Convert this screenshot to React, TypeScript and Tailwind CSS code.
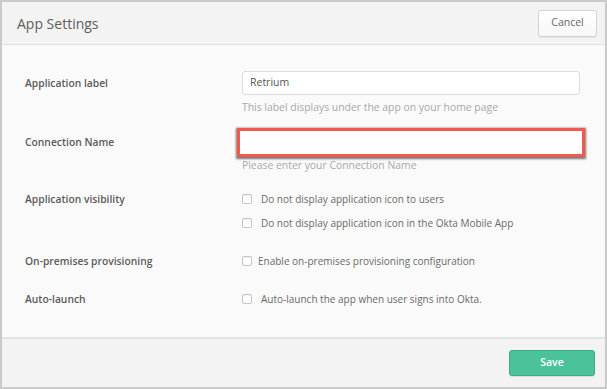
import React from "react";

const font = { fontFamily: '"Open Sans", "Liberation Sans", sans-serif' };

function Box() {
  return (
    <span className="inline-block w-[10px] h-[10px] rounded-[2px] border border-[#c4c4c4] bg-white shadow-[inset_0_1px_1px_rgba(0,0,0,0.06)]" />
  );
}

function Label({ children }: { children: React.ReactNode }) {
  return (
    <div className="w-[217px] shrink-0 text-[10.3px] font-semibold text-[#5a5a5a] leading-[14px]">
      {children}
    </div>
  );
}

export default function App() {
  return (
    <div
      className="w-[607px] h-[389px] border-2 border-[#cacaca] bg-[#fafafa] flex flex-col overflow-hidden"
      style={font}
    >
      <div className="h-[43px] shrink-0 bg-[#f3f3f3] border-b border-[#e2e2e2] flex items-center justify-between pl-[15px] pr-[8px]">
        <div className="text-[14px] text-[#5e5e5e]">App Settings</div>
        <button className="h-[27px] w-[59px] rounded-[3px] border border-[#d3d3d3] bg-gradient-to-b from-white to-[#f7f7f7] shadow-[0_1px_1px_rgba(0,0,0,0.06)] text-[10.5px] text-[#666]">
          Cancel
        </button>
      </div>

      <div className="flex-1 pl-[23px] pr-[25px] pt-[26px] flex flex-col">
        <div className="flex items-start">
          <div className="h-[24px] flex items-center">
            <Label>Application label</Label>
          </div>
          <div className="flex-1">
            <div className="h-[24px] bg-white border border-[#dcdcdc] rounded-[3px] flex items-center pl-[7px] text-[10.5px] text-[#555]">
              Retrium
            </div>
            <div className="mt-[5px] text-[10.4px] leading-[14px] text-[#a9a9a9]">
              This label displays under the app on your home page
            </div>
          </div>
        </div>

        <div className="flex items-start mt-[14px]">
          <div className="h-[27px] flex items-center">
            <Label>Connection Name</Label>
          </div>
          <div className="flex-1">
            <div className="ml-[-5px] mr-[-5px] h-[29px] border-[3px] border-[#f2584b] bg-white shadow-[0_1px_2px_1px_rgba(60,60,60,0.7)]" />
            <div className="mt-[1px] text-[10.4px] leading-[14px] text-[#a9a9a9]">
              Please enter your Connection Name
            </div>
          </div>
        </div>

        <div className="flex items-start mt-[20px]">
          <Label>Application visibility</Label>
          <div className="flex-1 flex flex-col gap-[10px] text-[10px] leading-[14px] text-[#6a6a6a]">
            <div className="flex items-center gap-[9px]">
              <Box />
              <span>Do not display application icon to users</span>
            </div>
            <div className="flex items-center gap-[9px]">
              <Box />
              <span>Do not display application icon in the Okta Mobile App</span>
            </div>
          </div>
        </div>

        <div className="flex items-start mt-[24px]">
          <Label>On-premises provisioning</Label>
          <div className="flex items-center gap-[6px] text-[10px] leading-[14px] text-[#6a6a6a]">
            <Box />
            <span>Enable on-premises provisioning configuration</span>
          </div>
        </div>

        <div className="flex items-start mt-[24px]">
          <Label>Auto-launch</Label>
          <div className="flex items-center gap-[9px] text-[10px] leading-[14px] text-[#6a6a6a]">
            <Box />
            <span>Auto-launch the app when user signs into Okta.</span>
          </div>
        </div>
      </div>

      <div className="h-[50px] shrink-0 bg-[#f3f3f3] border-t-2 border-[#e4e4e4] flex items-center justify-end pr-[10px]">
        <button className="h-[26px] w-[86px] rounded-[3px] border border-[#3faa86] bg-[#4cc29b] text-white text-[10.5px] font-semibold shadow-[0_1px_1px_rgba(0,0,0,0.1)]">
          Save
        </button>
      </div>
    </div>
  );
}
